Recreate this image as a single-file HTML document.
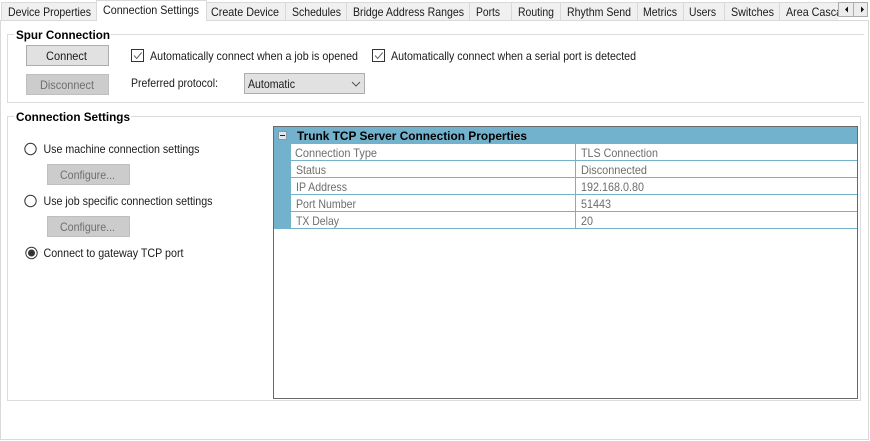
<!DOCTYPE html>
<html><head><meta charset="utf-8"><style>
html,body{margin:0;padding:0;background:#fff;width:870px;height:441px;overflow:hidden}
svg{display:block}
text{font-family:"Liberation Sans",sans-serif;font-size:12px;fill:#1a1a1a}
.g{fill:#6d6d6d}
.d{fill:#6f6f6f}
.b{font-weight:bold;font-size:12px;fill:#000}
</style></head><body>
<svg width="870" height="441" viewBox="0 0 870 441" shape-rendering="crispEdges">
<rect width="870" height="441" fill="#fff"/>
<!-- tab strip -->
<rect x="2" y="2" width="836" height="18" fill="#f0f0f0"/>
<rect x="2" y="2" width="836" height="1" fill="#d9d9d9"/>
<rect x="0" y="20" width="869" height="1" fill="#d9d9d9"/>
<!-- page border -->
<rect x="0" y="20" width="1" height="420" fill="#d9d9d9"/>
<rect x="868" y="20" width="1" height="420" fill="#d9d9d9"/>
<rect x="0" y="439" width="869" height="1" fill="#d9d9d9"/>
<!-- tab seps -->
<g fill="#d9d9d9">
<rect x="1" y="2" width="1" height="18"/>
<rect x="285" y="2" width="1" height="18"/>
<rect x="346" y="2" width="1" height="18"/>
<rect x="469" y="2" width="1" height="18"/>
<rect x="511" y="2" width="1" height="18"/>
<rect x="560" y="2" width="1" height="18"/>
<rect x="637" y="2" width="1" height="18"/>
<rect x="683" y="2" width="1" height="18"/>
<rect x="724" y="2" width="1" height="18"/>
<rect x="779" y="2" width="1" height="18"/>
</g>
<!-- selected tab -->
<rect x="97" y="0" width="109" height="21" fill="#fff"/>
<rect x="97" y="0" width="109" height="1" fill="#d9d9d9"/>
<rect x="96" y="0" width="1" height="21" fill="#d9d9d9"/>
<rect x="206" y="0" width="1" height="21" fill="#d9d9d9"/>
<text x="8" y="16" textLength="83" lengthAdjust="spacingAndGlyphs">Device Properties</text>
<text x="103" y="14" textLength="96" lengthAdjust="spacingAndGlyphs">Connection Settings</text>
<text x="211" y="16" textLength="68" lengthAdjust="spacingAndGlyphs">Create Device</text>
<text x="292" y="16" textLength="49" lengthAdjust="spacingAndGlyphs">Schedules</text>
<text x="353" y="16" textLength="111" lengthAdjust="spacingAndGlyphs">Bridge Address Ranges</text>
<text x="476" y="16" textLength="24" lengthAdjust="spacingAndGlyphs">Ports</text>
<text x="518" y="16" textLength="36" lengthAdjust="spacingAndGlyphs">Routing</text>
<text x="567" y="16" textLength="64" lengthAdjust="spacingAndGlyphs">Rhythm Send</text>
<text x="643" y="16" textLength="34" lengthAdjust="spacingAndGlyphs">Metrics</text>
<text x="689" y="16" textLength="27" lengthAdjust="spacingAndGlyphs">Users</text>
<text x="731" y="16" textLength="43" lengthAdjust="spacingAndGlyphs">Switches</text>
<text x="786" y="16" textLength="68" lengthAdjust="spacingAndGlyphs">Area Cascade</text>
<!-- scroll buttons -->
<rect x="838" y="0" width="32" height="20" fill="#fff"/>
<rect x="0" y="20" width="869" height="1" fill="#d9d9d9" opacity="0"/>
<rect x="838" y="20" width="31" height="1" fill="#d9d9d9"/>
<rect x="838.5" y="2.5" width="15" height="14" fill="#ececec" stroke="#adadad"/>
<rect x="853.5" y="2.5" width="14" height="14" fill="#ececec" stroke="#adadad"/>
<path d="M848 6.5v6l-3-3z" fill="#111" shape-rendering="auto"/>
<path d="M861 6.5v6l3-3z" fill="#111" shape-rendering="auto"/>
<!-- group 1 -->
<g fill="#dcdcdc">
<rect x="7" y="34" width="857" height="1"/>
<rect x="7" y="34" width="1" height="69"/>
<rect x="7" y="102" width="857" height="1"/>
</g>
<rect x="14" y="28" width="97" height="14" fill="#fff"/>
<text class="b" x="16" y="39" textLength="94" lengthAdjust="spacingAndGlyphs">Spur Connection</text>
<rect x="26.5" y="45.5" width="82" height="20" fill="#e1e1e1" stroke="#adadad"/>
<text x="46" y="60" textLength="41" lengthAdjust="spacingAndGlyphs">Connect</text>
<rect x="26.5" y="74.5" width="82" height="20" fill="#cccccc" stroke="#bfbfbf"/>
<text class="d" x="40" y="89" textLength="54" lengthAdjust="spacingAndGlyphs">Disconnect</text>
<rect x="131.5" y="49.5" width="12" height="12" fill="#fff" stroke="#333"/>
<path d="M134 55.5l2.7 3 5-6" fill="none" stroke="#666" stroke-width="1" shape-rendering="auto"/>
<text x="150" y="60" textLength="208" lengthAdjust="spacingAndGlyphs">Automatically connect when a job is opened</text>
<rect x="372.5" y="49.5" width="12" height="12" fill="#fff" stroke="#333"/>
<path d="M375 55.5l2.7 3 5-6" fill="none" stroke="#666" stroke-width="1" shape-rendering="auto"/>
<text x="391" y="60" textLength="245" lengthAdjust="spacingAndGlyphs">Automatically connect when a serial port is detected</text>
<text x="131" y="87" textLength="87" lengthAdjust="spacingAndGlyphs">Preferred protocol:</text>
<rect x="244.5" y="73.5" width="120" height="20" fill="#e1e1e1" stroke="#adadad"/>
<text x="248" y="88" textLength="47" lengthAdjust="spacingAndGlyphs">Automatic</text>
<path d="M352 82l4 4 4-4" fill="none" stroke="#555" stroke-width="1" shape-rendering="auto"/>
<!-- group 2 -->
<g fill="#dcdcdc">
<rect x="7" y="116" width="854" height="1"/>
<rect x="7" y="116" width="1" height="285"/>
<rect x="7" y="400" width="854" height="1"/>
<rect x="860" y="116" width="1" height="285"/>
</g>
<rect x="14" y="110" width="117" height="14" fill="#fff"/>
<text class="b" x="16" y="121" textLength="114" lengthAdjust="spacingAndGlyphs">Connection Settings</text>
<g shape-rendering="auto">
<circle cx="30.5" cy="149" r="5.7" fill="#fff" stroke="#333"/>
<circle cx="30.5" cy="201" r="5.7" fill="#fff" stroke="#333"/>
<circle cx="31.5" cy="253" r="5.7" fill="#fff" stroke="#333"/>
<circle cx="31.5" cy="253" r="3.5" fill="#333"/>
</g>
<text x="43.5" y="153" textLength="156" lengthAdjust="spacingAndGlyphs">Use machine connection settings</text>
<rect x="47.5" y="164.5" width="82" height="20" fill="#cccccc" stroke="#bfbfbf"/>
<text class="d" x="60" y="179" textLength="55" lengthAdjust="spacingAndGlyphs">Configure...</text>
<text x="43.5" y="205" textLength="169" lengthAdjust="spacingAndGlyphs">Use job specific connection settings</text>
<rect x="47.5" y="216.5" width="82" height="20" fill="#cccccc" stroke="#bfbfbf"/>
<text class="d" x="60" y="231" textLength="55" lengthAdjust="spacingAndGlyphs">Configure...</text>
<text x="43.5" y="257" textLength="140" lengthAdjust="spacingAndGlyphs">Connect to gateway TCP port</text>
<!-- property grid -->
<rect x="273.5" y="126.5" width="584" height="272" fill="#fff" stroke="#696969"/>
<rect x="274" y="127" width="583" height="17" fill="#73b2cc"/>
<rect x="274" y="144" width="17" height="85" fill="#73b2cc"/>
<rect x="278.5" y="131.5" width="8" height="8" fill="#dfe8ee" stroke="#8a9aa4"/>
<rect x="280" y="135" width="5" height="1" fill="#222"/>
<text class="b" x="297" y="140" textLength="230" lengthAdjust="spacingAndGlyphs">Trunk TCP Server Connection Properties</text>
<g fill="#73b2cc">
<rect x="291" y="160" width="566" height="1"/>
<rect x="291" y="177" width="566" height="1"/>
<rect x="291" y="194" width="566" height="1"/>
<rect x="291" y="211" width="566" height="1"/>
<rect x="274" y="228" width="583" height="1"/>
<rect x="575" y="144" width="1" height="85"/>
</g>
<text class="g" x="295" y="157" textLength="82" lengthAdjust="spacingAndGlyphs">Connection Type</text>
<text class="g" x="296" y="174" textLength="30" lengthAdjust="spacingAndGlyphs">Status</text>
<text class="g" x="296" y="191" textLength="51" lengthAdjust="spacingAndGlyphs">IP Address</text>
<text class="g" x="296" y="208" textLength="60" lengthAdjust="spacingAndGlyphs">Port Number</text>
<text class="g" x="296" y="225" textLength="43" lengthAdjust="spacingAndGlyphs">TX Delay</text>
<text class="g" x="581" y="157" textLength="77" lengthAdjust="spacingAndGlyphs">TLS Connection</text>
<text class="g" x="581" y="174" textLength="66" lengthAdjust="spacingAndGlyphs">Disconnected</text>
<text class="g" x="581" y="191" textLength="63" lengthAdjust="spacingAndGlyphs">192.168.0.80</text>
<text class="g" x="581" y="208" textLength="30" lengthAdjust="spacingAndGlyphs">51443</text>
<text class="g" x="581" y="225" textLength="12" lengthAdjust="spacingAndGlyphs">20</text>
</svg>
</body></html>
